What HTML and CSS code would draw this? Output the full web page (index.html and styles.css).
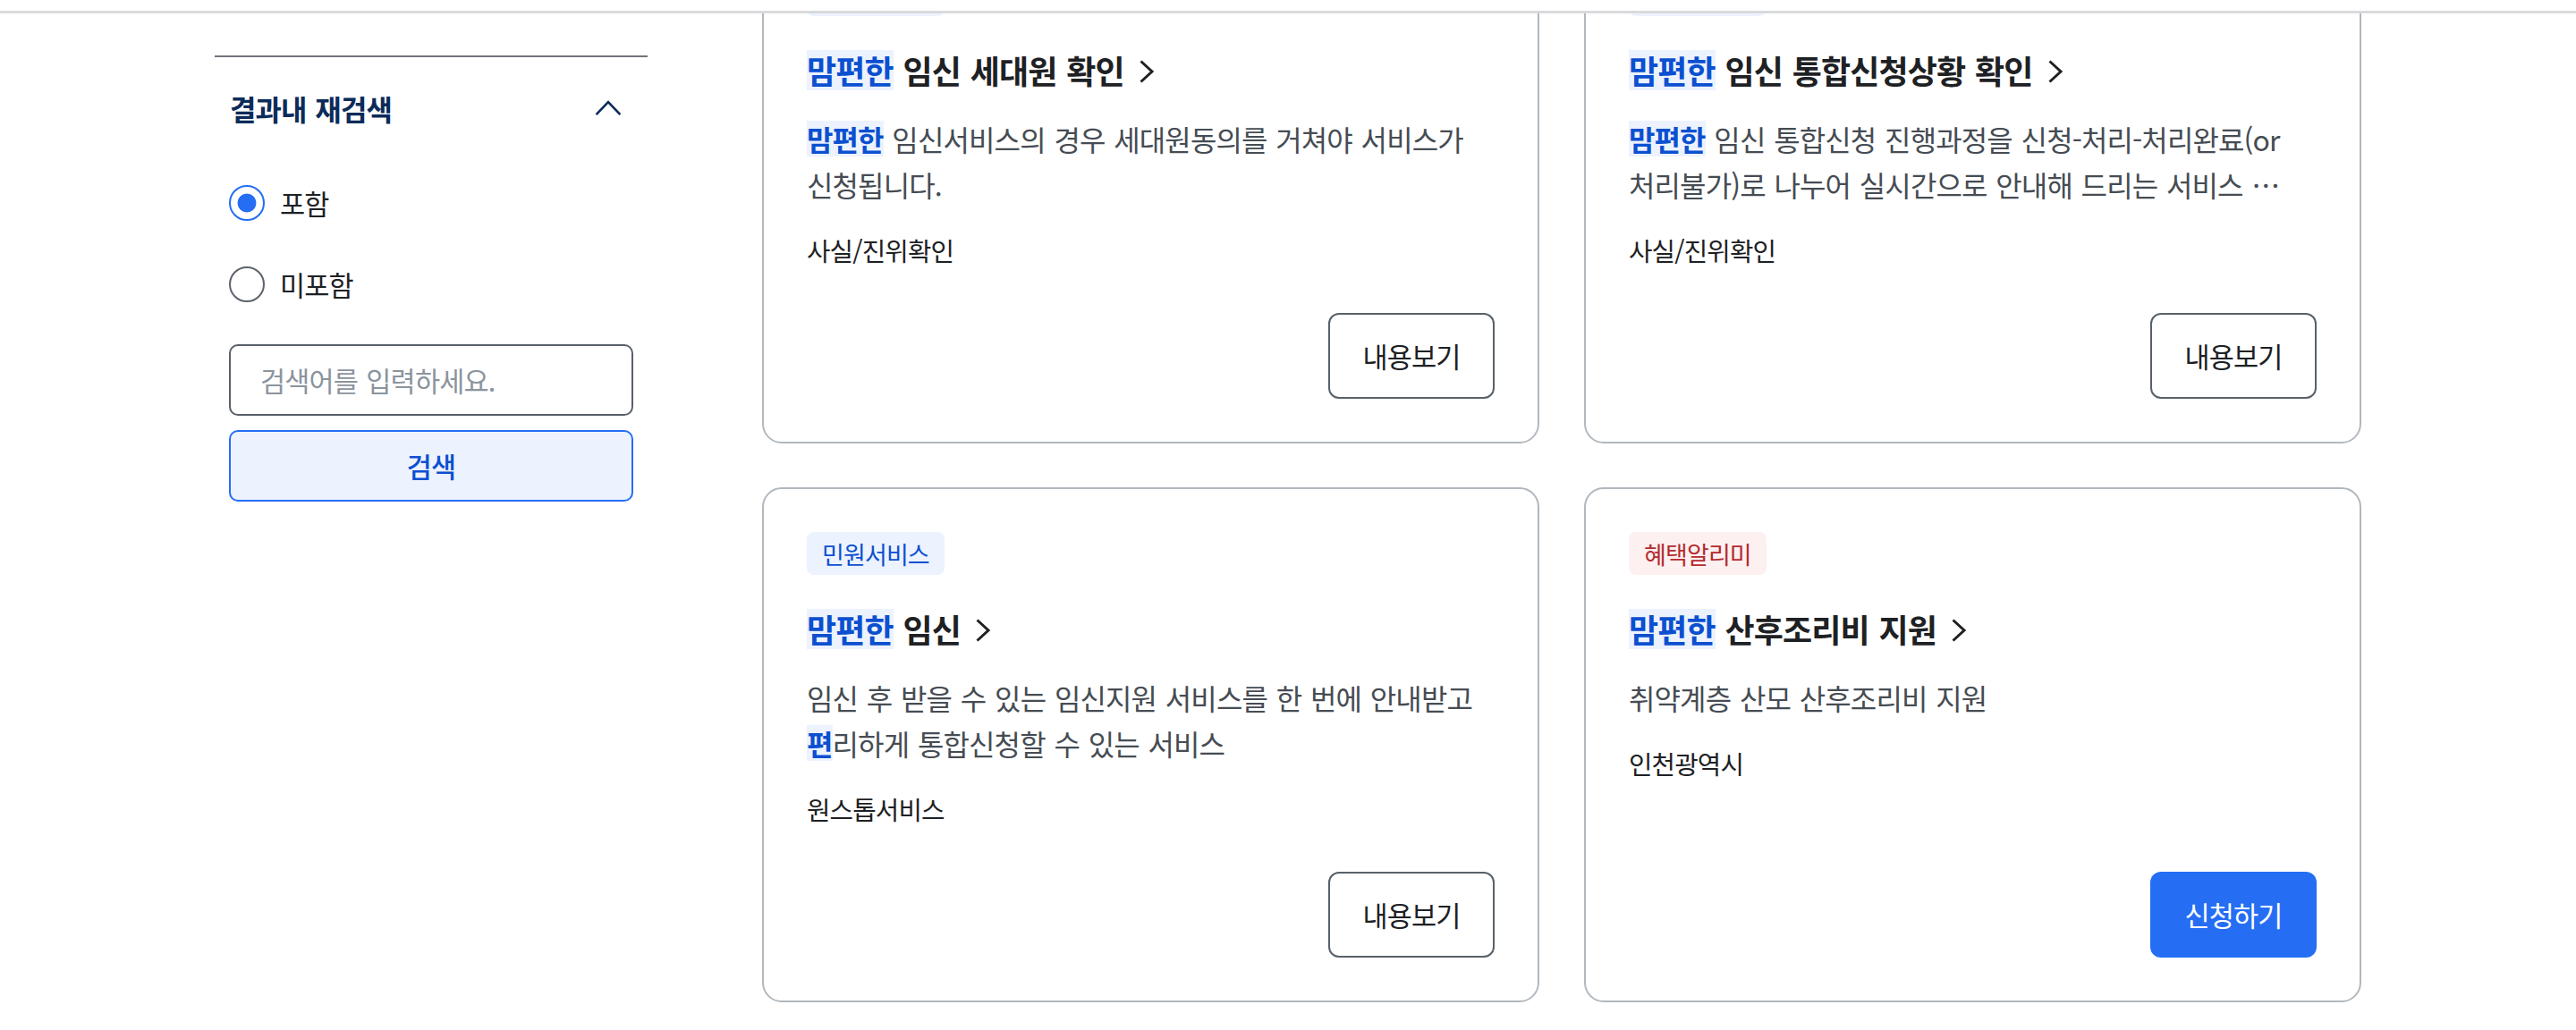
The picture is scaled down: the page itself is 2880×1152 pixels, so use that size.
FILE: index.html
```html
<!DOCTYPE html>
<html lang="ko">
<head>
<meta charset="utf-8">
<title>검색결과</title>
<link rel="stylesheet" href="styles.css">
</head>
<body>
<header class="site-header"></header>
<main class="page">
  <aside class="sidebar">
    <section class="filter">
      <div class="filter-head">
        <h2 class="filter-title">결과내 재검색</h2>
        <button class="toggle" type="button" aria-label="접기">
          <svg width="30" height="18" viewBox="0 0 30 18"><path d="M1.6 16.2 L15 2.2 L28.4 16.2" fill="none" stroke="#0b2b59" stroke-width="2.6"/></svg>
        </button>
      </div>
      <div class="radio-list">
        <label class="radio-row"><input type="radio" name="scope" checked><span>포함</span></label>
        <label class="radio-row"><input type="radio" name="scope"><span>미포함</span></label>
      </div>
      <div class="search-box">
        <input class="search-input" type="text" placeholder="검색어를 입력하세요.">
        <button class="search-btn" type="button">검색</button>
      </div>
    </section>
  </aside>

  <section class="results">
    <article class="card">
      <span class="tag">민원서비스</span>
      <h3 class="card-title"><mark class="hl">맘편한</mark> 임신 세대원 확인<svg class="arrow" width="18" height="28" viewBox="0 0 18 28"><path d="M2.5 2.5 L15 14 L2.5 25.5" fill="none" stroke="#1e2124" stroke-width="3"/></svg></h3>
      <p class="card-desc"><mark class="hl">맘편한</mark> 임신서비스의 경우 세대원동의를 거쳐야 서비스가 신청됩니다.</p>
      <p class="card-source">사실/진위확인</p>
      <div class="card-foot"><button class="btn btn-outline" type="button">내용보기</button></div>
    </article>

    <article class="card">
      <span class="tag">민원서비스</span>
      <h3 class="card-title"><mark class="hl">맘편한</mark> 임신 통합신청상황 확인<svg class="arrow" width="18" height="28" viewBox="0 0 18 28"><path d="M2.5 2.5 L15 14 L2.5 25.5" fill="none" stroke="#1e2124" stroke-width="3"/></svg></h3>
      <p class="card-desc"><mark class="hl">맘편한</mark> 임신 통합신청 진행과정을 신청-처리-처리완료(or 처리불가)로 나누어 실시간으로 안내해 드리는 서비스 …</p>
      <p class="card-source">사실/진위확인</p>
      <div class="card-foot"><button class="btn btn-outline" type="button">내용보기</button></div>
    </article>

    <article class="card">
      <span class="tag">민원서비스</span>
      <h3 class="card-title"><mark class="hl">맘편한</mark> 임신<svg class="arrow" width="18" height="28" viewBox="0 0 18 28"><path d="M2.5 2.5 L15 14 L2.5 25.5" fill="none" stroke="#1e2124" stroke-width="3"/></svg></h3>
      <p class="card-desc">임신 후 받을 수 있는 임신지원 서비스를 한 번에 안내받고 <span class="nowrap"><mark class="hl">편</mark>리하게</span> 통합신청할 수 있는 서비스</p>
      <p class="card-source">원스톱서비스</p>
      <div class="card-foot"><button class="btn btn-outline" type="button">내용보기</button></div>
    </article>

    <article class="card">
      <span class="tag tag-red">혜택알리미</span>
      <h3 class="card-title"><mark class="hl">맘편한</mark> 산후조리비 지원<svg class="arrow" width="18" height="28" viewBox="0 0 18 28"><path d="M2.5 2.5 L15 14 L2.5 25.5" fill="none" stroke="#1e2124" stroke-width="3"/></svg></h3>
      <p class="card-desc">취약계층 산모 산후조리비 지원</p>
      <p class="card-source">인천광역시</p>
      <div class="card-foot"><button class="btn btn-primary" type="button">신청하기</button></div>
    </article>
  </section>
</main>
</body>
</html>
```

FILE: styles.css
```css
* { box-sizing: border-box; }

html, body {
  margin: 0;
  background: #fff;
}

body {
  font-family: "Noto Sans CJK KR", "Noto Sans", sans-serif;
  color: #1e2124;
  letter-spacing: -0.055em;
  word-spacing: 0.1em;
  overflow: hidden;
}

.site-header {
  position: fixed;
  top: 0;
  left: 0;
  right: 0;
  height: 15px;
  background: #fff;
  border-bottom: 3px solid #d9dadd;
  z-index: 10;
}

.page {
  width: 2400px;
  margin: 0 auto;
  display: grid;
  grid-template-columns: 484px 1788px;
  column-gap: 128px;
  align-items: start;
}

/* ---------- sidebar ---------- */
.sidebar {
  margin-top: 62px;
  border-top: 2px solid #70757d;
}

.filter-head {
  height: 114px;
  display: flex;
  align-items: center;
  justify-content: space-between;
  padding: 0 29px 0 17px;
}

.filter-title {
  margin: 0;
  font-size: 32px;
  line-height: 1;
  font-weight: 700;
  color: #0b2b59;
}

.toggle {
  border: 0;
  background: none;
  padding: 0;
  width: 30px;
  height: 18px;
  display: flex;
}

.radio-list {
  display: flex;
  flex-direction: column;
  gap: 47px;
  padding: 27px 16px 0;
}

.radio-row {
  display: flex;
  align-items: center;
  gap: 17px;
  height: 44px;
  font-size: 30.6px;
  color: #1e2124;
}

.radio-row input {
  appearance: none;
  -webkit-appearance: none;
  margin: 0;
  width: 40px;
  height: 40px;
  border: 2px solid #5d636b;
  border-radius: 50%;
  background: #fff;
}

.radio-row input:checked {
  border-color: #256ef4;
  background: radial-gradient(circle, #256ef4 0, #256ef4 10px, #fff 10.8px);
}

.search-box {
  display: flex;
  flex-direction: column;
  gap: 16px;
  padding: 45px 16px 0;
}

.search-input {
  height: 80px;
  border: 2px solid #5a6069;
  border-radius: 10px;
  padding: 0 33px;
  font-family: inherit;
  font-size: 30.6px;
  letter-spacing: inherit;
  word-spacing: inherit;
  color: #1e2124;
  outline: none;
}

.search-input::placeholder { color: #8a949e; }

.search-btn {
  height: 80px;
  border: 2px solid #256ef4;
  border-radius: 10px;
  background: #ecf2fe;
  color: #0b50d0;
  font-family: inherit;
  font-size: 30.6px;
  font-weight: 500;
  letter-spacing: inherit;
}

/* ---------- results ---------- */
.results {
  margin-top: -80px;
  display: grid;
  grid-template-columns: repeat(2, 869px);
  column-gap: 50px;
  row-gap: 49px;
}

.card {
  border: 2px solid #b1b8be;
  border-radius: 22px;
  padding: 48px;
  display: flex;
  flex-direction: column;
  align-items: flex-start;
}

.tag {
  height: 48px;
  padding: 0 17px;
  border-radius: 8px;
  font-size: 27px;
  display: inline-flex;
  align-items: center;
  background: #ecf2fe;
  color: #0b50d0;
}

.tag-red {
  background: #fdf0f0;
  color: #b42a2e;
}

.card-title {
  margin: 33px 0 0;
  font-size: 36px;
  line-height: 54px;
  font-weight: 700;
  color: #1e2124;
}

.card-title .arrow {
  margin-left: 16px;
}

.hl {
  background: #ecf2fe;
  color: #0b50d0;
  font-weight: 700;
  display: inline-block;
}

.card-title .hl { line-height: 45px; }

.card-desc {
  margin: 25px 0 0;
  font-size: 32px;
  line-height: 51px;
  color: #464c53;
  word-break: keep-all;
  display: -webkit-box;
  -webkit-line-clamp: 2;
  -webkit-box-orient: vertical;
  overflow: hidden;
}

.card-desc .hl { line-height: 40px; }

.nowrap { white-space: nowrap; }

.card-source {
  margin: 26px 0 0;
  font-size: 28.8px;
  line-height: 44px;
  color: #1e2124;
}

.card-foot {
  margin-top: auto;
  padding-top: 48px;
  align-self: stretch;
  display: flex;
  justify-content: flex-end;
}

.btn {
  width: 186px;
  height: 96px;
  border-radius: 12px;
  font-family: inherit;
  font-size: 30.6px;
  letter-spacing: inherit;
  display: flex;
  align-items: center;
  justify-content: center;
}

.btn-outline {
  border: 2px solid #58616a;
  background: #fff;
  color: #1e2124;
}

.btn-primary {
  border: 0;
  background: #256ef4;
  color: #fff;
}
```
